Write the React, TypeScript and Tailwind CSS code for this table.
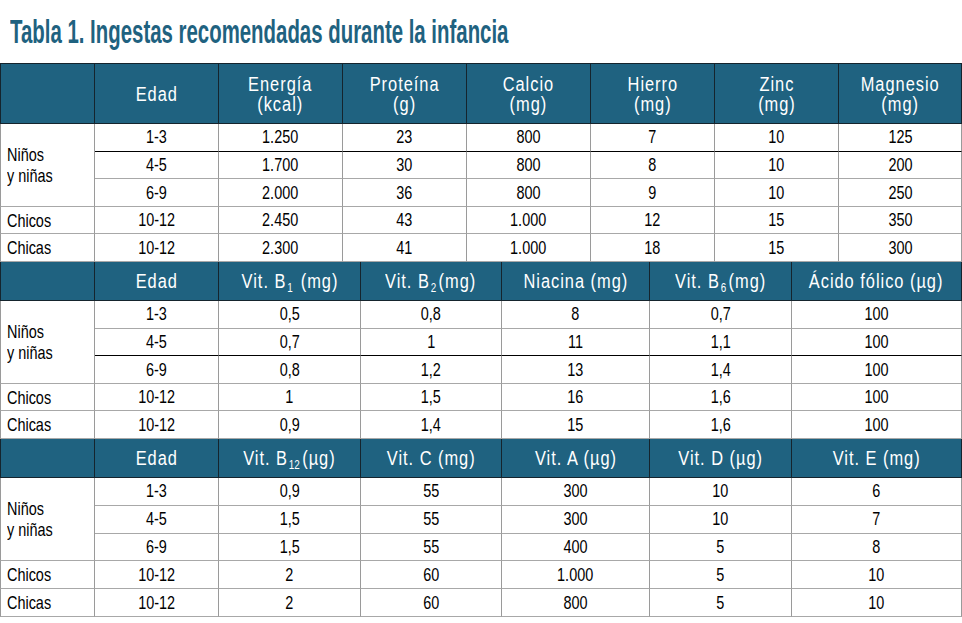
import React from 'react';

type Head = React.ReactNode;

interface Section {
  cols: string;
  rows: string;
  heads: Head[];
  data: { label?: string; age: string; values: string[] }[];
  blackAfter: number;
}

// Liberation Sans estrechada para imitar la fuente condensada del original
const Narrow = ({ children, left, body }: { children: React.ReactNode; left?: boolean; body?: boolean }) => (
  <span
    className={`inline-block whitespace-nowrap ${body ? 'scale-x-[0.78]' : 'scale-x-[0.82]'} ${
      left ? 'origin-left' : 'origin-center'
    }`}
  >
    {children}
  </span>
);

const Sub = ({ children }: { children: React.ReactNode }) => (
  <sub className="text-[12px] tracking-normal relative -bottom-[4px] ml-[1px] mr-[3px]">{children}</sub>
);

const two = (a: string, b: string) => (
  <span className="flex flex-col items-center leading-[20px]">
    <span>{a}</span>
    <span>{b}</span>
  </span>
);

const sections: Section[] = [
  {
    cols: 'grid-cols-[95px_124px_124px_124px_124px_124px_124px_123px]',
    rows: 'grid-rows-[61px_repeat(5,27.6px)]',
    heads: [
      '',
      'Edad',
      two('Energía', '(kcal)'),
      two('Proteína', '(g)'),
      two('Calcio', '(mg)'),
      two('Hierro', '(mg)'),
      two('Zinc', '(mg)'),
      two('Magnesio', '(mg)'),
    ],
    data: [
      { label: 'Niños\ny niñas', age: '1-3', values: ['1.250', '23', '800', '7', '10', '125'] },
      { age: '4-5', values: ['1.700', '30', '800', '8', '10', '200'] },
      { age: '6-9', values: ['2.000', '36', '800', '9', '10', '250'] },
      { label: 'Chicos', age: '10-12', values: ['2.450', '43', '1.000', '12', '15', '350'] },
      { label: 'Chicas', age: '10-12', values: ['2.300', '41', '1.000', '18', '15', '300'] },
    ],
    blackAfter: 0,
  },
  {
    cols: 'grid-cols-[95px_124px_142px_141px_148px_142px_170px]',
    rows: 'grid-rows-[39px_repeat(5,27.6px)]',
    heads: [
      '',
      'Edad',
      <>Vit. B<Sub>1</Sub>&nbsp;(mg)</>,
      <>Vit. B<Sub>2</Sub>(mg)</>,
      'Niacina (mg)',
      <>Vit. B<Sub>6</Sub>(mg)</>,
      'Ácido fólico (µg)',
    ],
    data: [
      { label: 'Niños\ny niñas', age: '1-3', values: ['0,5', '0,8', '8', '0,7', '100'] },
      { age: '4-5', values: ['0,7', '1', '11', '1,1', '100'] },
      { age: '6-9', values: ['0,8', '1,2', '13', '1,4', '100'] },
      { label: 'Chicos', age: '10-12', values: ['1', '1,5', '16', '1,6', '100'] },
      { label: 'Chicas', age: '10-12', values: ['0,9', '1,4', '15', '1,6', '100'] },
    ],
    blackAfter: 1,
  },
  {
    cols: 'grid-cols-[95px_124px_142px_141px_148px_142px_170px]',
    rows: 'grid-rows-[39px_repeat(5,27.8px)]',
    heads: [
      '',
      'Edad',
      <>Vit. B<Sub>12</Sub>(µg)</>,
      'Vit. C (mg)',
      'Vit. A (µg)',
      'Vit. D (µg)',
      'Vit. E (mg)',
    ],
    data: [
      { label: 'Niños\ny niñas', age: '1-3', values: ['0,9', '55', '300', '10', '6'] },
      { age: '4-5', values: ['1,5', '55', '300', '10', '7'] },
      { age: '6-9', values: ['1,5', '55', '400', '5', '8'] },
      { label: 'Chicos', age: '10-12', values: ['2', '60', '1.000', '5', '10'] },
      { label: 'Chicas', age: '10-12', values: ['2', '60', '800', '5', '10'] },
    ],
    blackAfter: -1,
  },
];

function TableSection({ s, first }: { s: Section; first: boolean }) {
  return (
    <div className={`grid ${s.cols} ${s.rows}`}>
      {s.heads.map((h, i) => (
        <div
          key={`h${i}`}
          className={`bg-[#1f6280] text-white text-[20px] tracking-[1.2px] flex items-center justify-center border-r border-b border-[#15242d] ${
            i === 0 ? 'border-l' : ''
          } ${first ? 'border-t' : ''}`}
        >
          <Narrow>{h}</Narrow>
        </div>
      ))}
      {s.data.map((r, ri) => {
        const bottom = ri === s.blackAfter ? 'border-b-black' : 'border-b-[#a8a8a8]';
        return (
          <React.Fragment key={`r${ri}`}>
            {r.label && (
              <div
                className={`border-l border-r border-b border-[#9a9a9a] border-b-[#a8a8a8] flex items-center pl-[6px] ${
                  r.label.includes('\n') ? 'row-span-3' : ''
                }`}
              >
                <Narrow left body>
                  <span className="whitespace-pre-line leading-[21px] block">{r.label}</span>
                </Narrow>
              </div>
            )}
            {[r.age, ...r.values].map((v, vi) => (
              <div
                key={vi}
                className={`border-r border-b border-r-[#9a9a9a] ${bottom} flex items-center justify-center`}
              >
                <Narrow body>{v}</Narrow>
              </div>
            ))}
          </React.Fragment>
        );
      })}
    </div>
  );
}

export default function App() {
  return (
    <div className="w-[962px] h-[623px] bg-white font-['Liberation_Sans',Arial,sans-serif] text-[18.5px] text-black overflow-hidden">
      <div className="h-[63px] pl-[10px] pt-[11px]">
        <h1 className="text-[34px] font-bold leading-[40px] text-[#1f6280] origin-left scale-x-[0.6] whitespace-nowrap">
          Tabla 1. Ingestas recomendadas durante la infancia
        </h1>
      </div>
      {sections.map((s, i) => (
        <TableSection key={i} s={s} first={i === 0} />
      ))}
    </div>
  );
}
